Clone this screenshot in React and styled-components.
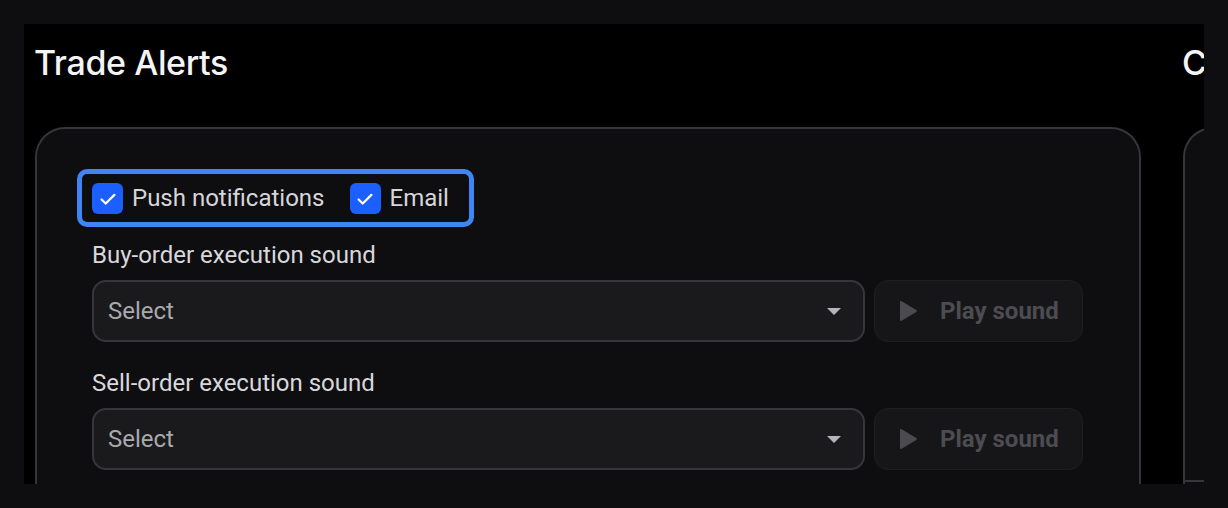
import React from 'react'
import styled, { createGlobalStyle } from 'styled-components'

const GlobalStyle = createGlobalStyle`
  html, body {
    margin: 0;
    background: #0e0e10;
  }
  body {
    font-family: Roboto, "Liberation Sans", sans-serif;
  }
`

const Page = styled.div`
  padding: 24px;
  height: 508px;
  box-sizing: border-box;
`

const Viewport = styled.div`
  width: 1180px;
  height: 460px;
  background: #000;
  overflow: hidden;
  display: flex;
  gap: 42px;
  padding-left: 11px;
  box-sizing: border-box;
`

const Section = styled.section`
  flex: none;
  width: ${p => p.width}px;
  display: flex;
  flex-direction: column;
`

const Title = styled.h2`
  margin: 0;
  padding-top: 19px;
  height: 103px;
  box-sizing: border-box;
  font-family: Inter, "Noto Sans", sans-serif;
  font-weight: 500;
  font-size: 34px;
  line-height: 40px;
  letter-spacing: -0.4px;
  margin-left: -1px;
  color: #f4f4f5;
  white-space: nowrap;
`

const Card = styled.div`
  flex: 1;
  background: #0e0e10;
  border: 2px solid #35353a;
  border-bottom: none;
  border-radius: 30px 30px 0 0;
  padding: 40px 56px 0 55px;
  display: flex;
  flex-direction: column;
`

const CheckGroup = styled.div`
  align-self: flex-start;
  display: flex;
  align-items: center;
  gap: 25px;
  margin-left: -15px;
  padding: 9px 20px 8px 10px;
  border: 5px solid #3f86f4;
  border-radius: 10px;
`

const CheckLabel = styled.label`
  display: flex;
  align-items: center;
  gap: 9px;
  font-size: 24px;
  line-height: 31px;
  color: #d6d6da;
  cursor: pointer;
`

const Box = styled.span`
  width: 31px;
  height: 31px;
  border-radius: 6px;
  background: #1b5ffe;
  display: flex;
  align-items: center;
  justify-content: center;
`

const Field = styled.div`
  display: flex;
  flex-direction: column;
  margin-top: ${p => p.first ? 14 : 27}px;
`

const FieldLabel = styled.div`
  font-size: 24px;
  line-height: 28px;
  color: #d8d8dc;
  margin-bottom: 11px;
`

const Row = styled.div`
  display: flex;
  gap: 9px;
`

const SelectBox = styled.div`
  flex: 1;
  height: 62px;
  box-sizing: border-box;
  background: #1a1a1d;
  border: 2px solid #36363b;
  border-radius: 14px;
  display: flex;
  align-items: center;
  justify-content: space-between;
  padding: 0 22px 0 14px;
  font-size: 24px;
  color: #a9a9ae;
`

const Caret = styled.span`
  width: 0;
  height: 0;
  border-left: 7px solid transparent;
  border-right: 7px solid transparent;
  border-top: 7px solid #b4b4bb;
`

const PlayButton = styled.button`
  width: 209px;
  height: 62px;
  box-sizing: border-box;
  background: #161618;
  border: 1px solid #1f1f22;
  border-radius: 14px;
  display: flex;
  align-items: center;
  gap: 22px;
  padding: 0 0 0 24px;
  font-family: Roboto, "Liberation Sans", sans-serif;
  font-weight: 700;
  font-size: 24px;
  color: #4c4c51;
  cursor: not-allowed;
`

const SideCard = styled(Card)`
  padding: 0;
  justify-content: flex-end;
`

const Divider = styled.div`
  height: 2px;
  background: #35353a;
  margin-bottom: 2px;
`

const Check = () => (
  <svg width="22" height="22" viewBox="0 0 24 24" fill="none" stroke="#fff" strokeWidth="2.4" strokeLinecap="round" strokeLinejoin="round">
    <path d="M5 12.5l4.5 4.5L19 7.5" />
  </svg>
)

const PlayIcon = () => (
  <svg width="19" height="22" viewBox="0 0 19 22">
    <path d="M1 2.2v17.6c0 .9 1 1.4 1.7.9l14.6-8.8c.7-.4.7-1.4 0-1.8L2.7 1.3C2 .8 1 1.3 1 2.2z" fill="#4a4a4f" />
  </svg>
)

const SoundField = ({ label, first }) => (
  <Field first={first}>
    <FieldLabel>{label}</FieldLabel>
    <Row>
      <SelectBox>
        <span>Select</span>
        <Caret />
      </SelectBox>
      <PlayButton disabled>
        <PlayIcon />
        Play sound
      </PlayButton>
    </Row>
  </Field>
)

export default function App() {
  return (
    <>
      <GlobalStyle />
      <Page>
        <Viewport>
          <Section width={1106}>
            <Title>Trade Alerts</Title>
            <Card>
              <CheckGroup>
                <CheckLabel><Box><Check /></Box>Push notifications</CheckLabel>
                <CheckLabel><Box><Check /></Box>Email</CheckLabel>
              </CheckGroup>
              <SoundField first label="Buy-order execution sound" />
              <SoundField label="Sell-order execution sound" />
            </Card>
          </Section>
          <Section width={400}>
            <Title>Chart Alerts</Title>
            <SideCard>
              <Divider />
            </SideCard>
          </Section>
        </Viewport>
      </Page>
    </>
  )
}
